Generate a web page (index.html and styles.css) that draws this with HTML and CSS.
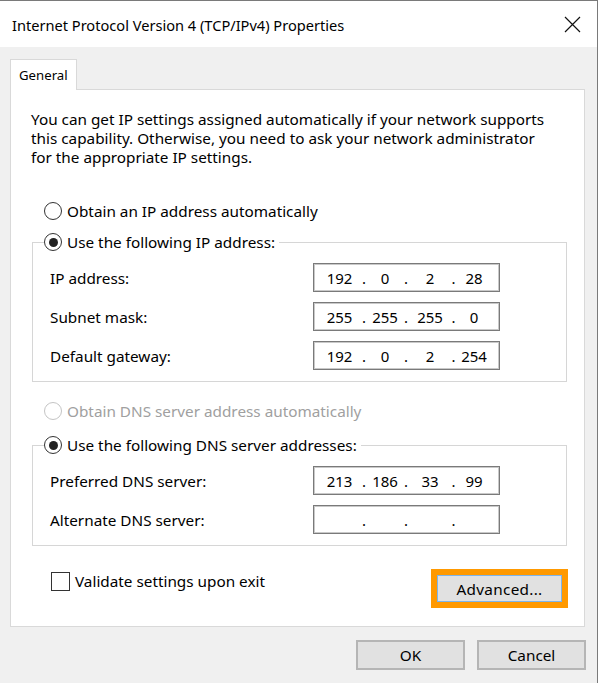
FILE: index.html
```html
<!DOCTYPE html>
<html lang="en">
<head>
<meta charset="utf-8">
<title>Internet Protocol Version 4 (TCP/IPv4) Properties</title>
<link rel="stylesheet" href="styles.css">
</head>
<body>
<div class="window">
  <header class="titlebar">
    <span class="title">Internet Protocol Version 4 (TCP/IPv4) Properties</span>
    <svg class="close" width="17" height="17" viewBox="0 0 17 17"><path d="M1 1 L16 16 M16 1 L1 16" stroke="#111" stroke-width="1.2" fill="none"/></svg>
  </header>
  <main class="body">
    <div class="tabs"><div class="tab">General</div></div>
    <section class="panel">
      <p class="intro">You can get IP settings assigned automatically if your network supports<br>this capability. Otherwise, you need to ask your network administrator<br>for the appropriate IP settings.</p>

      <div class="option"><span class="radio"></span><span>Obtain an IP address automatically</span></div>

      <div class="group">
        <div class="option legend"><span class="radio checked"></span><span>Use the following IP address:</span></div>
        <div class="fields">
          <div class="field"><span>IP address:</span>
            <div class="ip"><span class="seg">192</span><span class="dot">.</span><span class="seg">0</span><span class="dot">.</span><span class="seg">2</span><span class="dot">.</span><span class="seg">28</span></div>
          </div>
          <div class="field"><span>Subnet mask:</span>
            <div class="ip"><span class="seg">255</span><span class="dot">.</span><span class="seg">255</span><span class="dot">.</span><span class="seg">255</span><span class="dot">.</span><span class="seg">0</span></div>
          </div>
          <div class="field"><span>Default gateway:</span>
            <div class="ip"><span class="seg">192</span><span class="dot">.</span><span class="seg">0</span><span class="dot">.</span><span class="seg">2</span><span class="dot">.</span><span class="seg">254</span></div>
          </div>
        </div>
      </div>

      <div class="option option-dns disabled"><span class="radio"></span><span>Obtain DNS server address automatically</span></div>

      <div class="group group-dns">
        <div class="option legend"><span class="radio checked"></span><span>Use the following DNS server addresses:</span></div>
        <div class="fields">
          <div class="field"><span>Preferred DNS server:</span>
            <div class="ip"><span class="seg">213</span><span class="dot">.</span><span class="seg">186</span><span class="dot">.</span><span class="seg">33</span><span class="dot">.</span><span class="seg">99</span></div>
          </div>
          <div class="field"><span>Alternate DNS server:</span>
            <div class="ip"><span class="seg"></span><span class="dot">.</span><span class="seg"></span><span class="dot">.</span><span class="seg"></span><span class="dot">.</span><span class="seg"></span></div>
          </div>
        </div>
      </div>

      <div class="bottom-row">
        <label class="check"><span class="checkbox"></span><span>Validate settings upon exit</span></label>
        <div class="highlight"><button class="btn btn-advanced">Advanced...</button></div>
      </div>
    </section>
    <footer class="buttons">
      <button class="btn btn-dialog">OK</button>
      <button class="btn btn-dialog">Cancel</button>
    </footer>
  </main>
</div>
</body>
</html>
```

FILE: styles.css
```css
* { box-sizing: border-box; }
html, body { margin: 0; padding: 0; }
body {
  width: 598px;
  height: 683px;
  overflow: hidden;
  background: #f0f0f0;
  font-family: "Noto Sans", "Open Sans", sans-serif;
  font-size: 15.3px;
  color: #000;
}
.window {
  width: 598px;
  height: 683px;
  border-top: 1px solid #7a7a7a;
  border-right: 1px solid #7a7a7a;
  background: #f0f0f0;
  display: flex;
  flex-direction: column;
}
.titlebar {
  height: 46px;
  background: #fff;
  display: flex;
  align-items: center;
  justify-content: space-between;
  padding: 0 16px 0 12px;
}
.title {
  font-size: 14.6px;
  line-height: 20px;
  padding-top: 2px;
}
.close { display: block; }
.body {
  padding: 12px 0 0 10px;
  display: flex;
  flex-direction: column;
}
.tabs { display: flex; }
.tab {
  width: 67px;
  height: 31px;
  margin-bottom: -1px;
  position: relative;
  z-index: 1;
  background: #fff;
  border: 1px solid #d9d9d9;
  border-bottom: none;
  display: flex;
  align-items: center;
  padding-left: 8px;
  line-height: 20px;
  font-size: 13.2px;
}
.panel {
  width: 575px;
  height: 538px;
  background: #fff;
  border: 1px solid #d9d9d9;
  padding: 20px 17px 0 20px;
  display: flex;
  flex-direction: column;
}
.intro {
  margin: 0;
  line-height: 19px;
  white-space: nowrap;
}
.option {
  display: flex;
  align-items: center;
  height: 20px;
  line-height: 20px;
  margin: 34px 0 0 13px;
  gap: 5px;
}
.radio {
  width: 18px;
  height: 18px;
  border: 1.5px solid #333;
  border-radius: 50%;
  display: flex;
  align-items: center;
  justify-content: center;
  flex: none;
}
.radio.checked::after {
  content: "";
  width: 9px;
  height: 9px;
  border-radius: 50%;
  background: #222;
}
.disabled { color: #a0a0a0; }
.disabled .radio { border-color: #c4c4c4; }
.group {
  margin: 21px 0 0 1px;
  border: 1px solid #d6d6d6;
  padding: 0 66px 11px 17px;
  display: flex;
  flex-direction: column;
}
.legend {
  margin: -11px 0 0 -5px;
  align-self: flex-start;
  background: #fff;
  padding: 0 4px 0 0;
}
.option.legend { margin-left: -6px; padding-left: 0; }
.fields {
  margin-top: 11px;
  display: flex;
  flex-direction: column;
  gap: 10px;
}
.field {
  display: flex;
  align-items: center;
  justify-content: space-between;
  height: 29px;
}
.ip {
  width: 187px;
  height: 29px;
  border: 1px solid #7a7a7a;
  box-shadow: inset 0 0 0 1px #c9c9c9;
  display: grid;
  grid-template-columns: 5px 41px 8px 34px 8px 40px 7px 34px;
  align-items: center;
  font-size: 15px;
}
.ip .seg:first-child { grid-column: 2; }
.seg, .dot { text-align: center; }
.option-dns { margin-top: 19px; }
.group-dns { margin-top: 24px; }
.bottom-row {
  margin: 23px 0 0 0;
  display: flex;
  justify-content: space-between;
  align-items: flex-start;
}
.check {
  display: flex;
  align-items: center;
  gap: 5px;
  margin: 3px 0 0 20px;
  line-height: 19px;
}
.checkbox {
  width: 19px;
  height: 19px;
  border: 1.5px solid #333;
  background: #fff;
  flex: none;
}
.highlight {
  border: 6px solid #ff9900;
  margin-right: -1px;
}
.btn {
  font-family: inherit;
  font-size: 15.3px;
  color: #000;
  background: #e1e1e1;
  border: 1px solid #adadad;
  padding: 0;
  display: block;
}
.btn-advanced {
  width: 125px;
  height: 27px;
  border-color: #7eb4ea;
  letter-spacing: 0.3px;
}
.buttons {
  display: flex;
  justify-content: flex-end;
  gap: 12px;
  padding: 13px 11px 0 0;
}
.btn-dialog {
  width: 109px;
  height: 30px;
  border: 2px solid #b5b5b5;
}
```
